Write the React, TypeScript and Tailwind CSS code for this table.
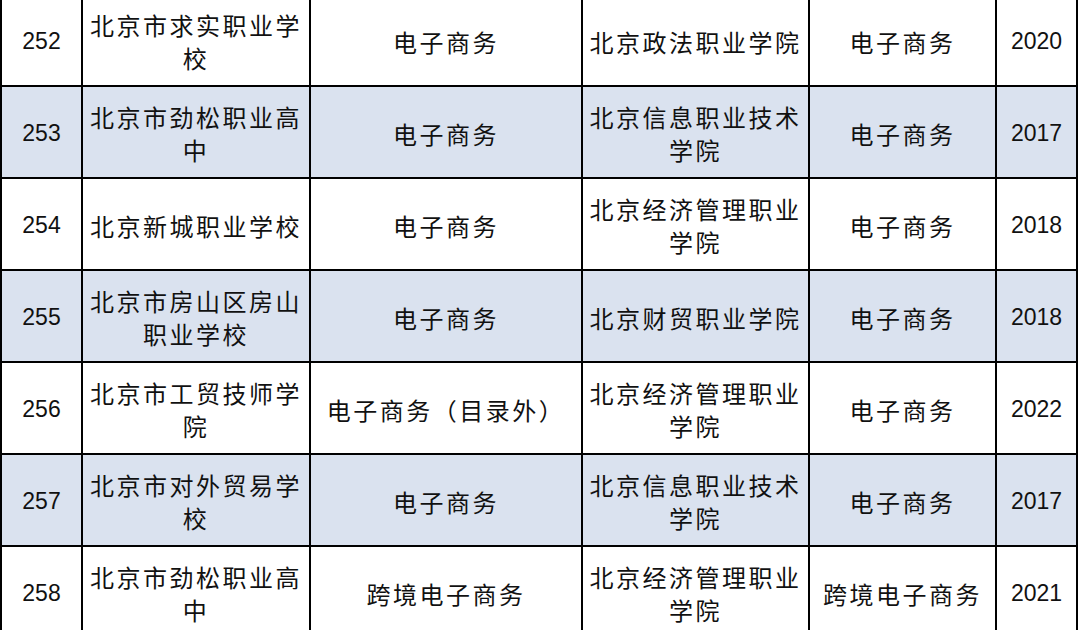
const rows = [
  { no: '252', school: '北京市求实职业学校', major: '电子商务', college: '北京政法职业学院', cmajor: '电子商务', year: '2020', shaded: false },
  { no: '253', school: '北京市劲松职业高中', major: '电子商务', college: '北京信息职业技术学院', cmajor: '电子商务', year: '2017', shaded: true },
  { no: '254', school: '北京新城职业学校', major: '电子商务', college: '北京经济管理职业学院', cmajor: '电子商务', year: '2018', shaded: false },
  { no: '255', school: '北京市房山区房山职业学校', major: '电子商务', college: '北京财贸职业学院', cmajor: '电子商务', year: '2018', shaded: true },
  { no: '256', school: '北京市工贸技师学院', major: '电子商务（目录外）', college: '北京经济管理职业学院', cmajor: '电子商务', year: '2022', shaded: false },
  { no: '257', school: '北京市对外贸易学校', major: '电子商务', college: '北京信息职业技术学院', cmajor: '电子商务', year: '2017', shaded: true },
  { no: '258', school: '北京市劲松职业高中', major: '跨境电子商务', college: '北京经济管理职业学院', cmajor: '跨境电子商务', year: '2021', shaded: false },
]

const cjk = "font-['Noto_Sans_CJK_SC',sans-serif] text-[24px] leading-[33px] tracking-[2.5px]"
const num = "font-['Liberation_Sans',Arial,sans-serif] text-[23px] leading-[33px]"

function Cell({ children, shaded, last, mono }: { children: string; shaded: boolean; last?: boolean; mono?: boolean }) {
  return (
    <div
      className={`h-[92px] pt-[2px] border-t-2 border-l-2 border-black flex items-center justify-center text-center px-1 text-[#111] ${
        shaded ? 'bg-[#dae2ef]' : 'bg-white'
      } ${last ? 'border-r-2' : ''}`}
    >
      <span className={mono ? num : cjk}>{children}</span>
    </div>
  )
}

export default function App() {
  return (
    <div className="w-[1080px] h-[630px] overflow-hidden bg-white">
      <div className="-mt-[7px] grid grid-cols-[81px_228px_272px_227px_187px_83px] w-[1078px]">
        {rows.map(r => (
          <div key={r.no} className="contents">
            <Cell shaded={r.shaded} mono>{r.no}</Cell>
            <Cell shaded={r.shaded}>{r.school}</Cell>
            <Cell shaded={r.shaded}>{r.major}</Cell>
            <Cell shaded={r.shaded}>{r.college}</Cell>
            <Cell shaded={r.shaded}>{r.cmajor}</Cell>
            <Cell shaded={r.shaded} last mono>{r.year}</Cell>
          </div>
        ))}
      </div>
    </div>
  )
}
